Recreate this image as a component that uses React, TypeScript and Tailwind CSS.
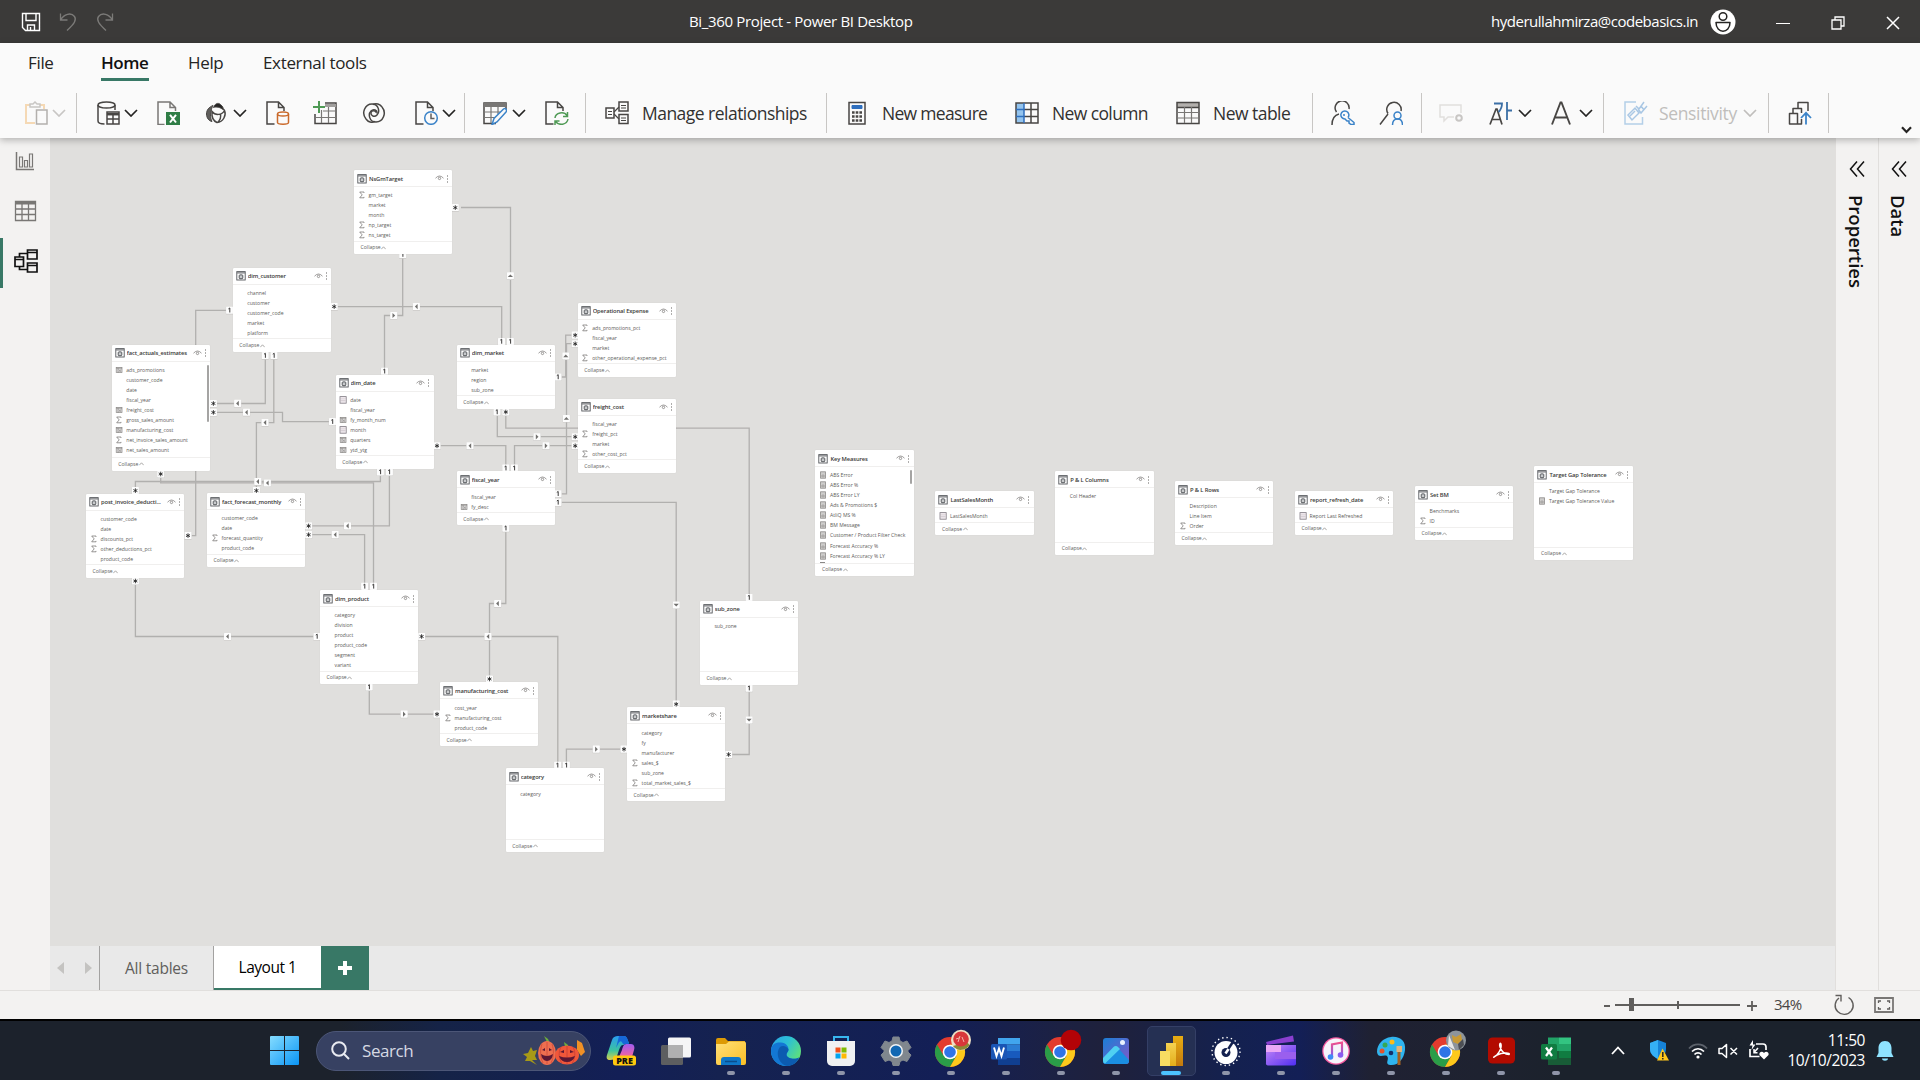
import React from "react";

type Kind = "sum" | "calc" | "date" | "measure" | "";
type Row = [Kind, string];
interface TableCard {
  name: string;
  x: number;
  y: number;
  h: number;
  rows: Row[];
  scroll?: "long" | "short";
}

const CANVAS_X = 50;
const CANVAS_Y = 138;

const TABLES: TableCard[] = [
  { name: "NsGmTarget", x: 354, y: 170, h: 84, rows: [["sum", "gm_target"], ["", "market"], ["", "month"], ["sum", "np_target"], ["sum", "ns_target"]] },
  { name: "dim_customer", x: 232.7, y: 267.6, h: 84.2, rows: [["", "channel"], ["", "customer"], ["", "customer_code"], ["", "market"], ["", "platform"]] },
  { name: "fact_actuals_estimates", x: 111.7, y: 344.6, h: 126, scroll: "long", rows: [["calc", "ads_promotions"], ["", "customer_code"], ["", "date"], ["", "fiscal_year"], ["calc", "freight_cost"], ["sum", "gross_sales_amount"], ["calc", "manufacturing_cost"], ["sum", "net_invoice_sales_amount"], ["calc", "net_sales_amount"]] },
  { name: "dim_date", x: 335.6, y: 374.5, h: 94, rows: [["date", "date"], ["", "fiscal_year"], ["calc", "fy_month_num"], ["date", "month"], ["calc", "quarters"], ["calc", "ytd_ytg"]] },
  { name: "dim_market", x: 456.7, y: 344.8, h: 64, rows: [["", "market"], ["", "region"], ["", "sub_zone"]] },
  { name: "Operational Expense", x: 577.7, y: 302.8, h: 74, rows: [["sum", "ads_promotions_pct"], ["", "fiscal_year"], ["", "market"], ["sum", "other_operational_expense_pct"]] },
  { name: "freight_cost", x: 577.7, y: 398.8, h: 74, rows: [["", "fiscal_year"], ["sum", "freight_pct"], ["", "market"], ["sum", "other_cost_pct"]] },
  { name: "fiscal_year", x: 456.7, y: 471.4, h: 54, rows: [["", "fiscal_year"], ["calc", "fy_desc"]] },
  { name: "post_invoice_deducti...", x: 86, y: 493.8, h: 84, rows: [["", "customer_code"], ["", "date"], ["sum", "discounts_pct"], ["sum", "other_deductions_pct"], ["", "product_code"]] },
  { name: "fact_forecast_monthly", x: 207, y: 493, h: 74, rows: [["", "customer_code"], ["", "date"], ["sum", "forecast_quantity"], ["", "product_code"]] },
  { name: "dim_product", x: 320, y: 590, h: 94, rows: [["", "category"], ["", "division"], ["", "product"], ["", "product_code"], ["", "segment"], ["", "variant"]] },
  { name: "manufacturing_cost", x: 440, y: 682.4, h: 64, rows: [["", "cost_year"], ["sum", "manufacturing_cost"], ["", "product_code"]] },
  { name: "category", x: 505.7, y: 768.4, h: 84, rows: [["", "category"]] },
  { name: "marketshare", x: 627, y: 707.4, h: 94, rows: [["", "category"], ["", "fy"], ["", "manufacturer"], ["sum", "sales_$"], ["", "sub_zone"], ["sum", "total_market_sales_$"]] },
  { name: "sub_zone", x: 699.8, y: 600.8, h: 84, rows: [["", "sub_zone"]] },
  { name: "Key Measures", x: 815.4, y: 450, h: 126, scroll: "short", rows: [["measure", "ABS Error"], ["measure", "ABS Error %"], ["measure", "ABS Error LY"], ["measure", "Ads & Promotions $"], ["measure", "AtliQ MS %"], ["measure", "BM Message"], ["measure", "Customer / Product Filter Check"], ["measure", "Forecast Accuracy %"], ["measure", "Forecast Accuracy % LY"]] },
  { name: "LastSalesMonth", x: 935.4, y: 491.2, h: 44, rows: [["date", "LastSalesMonth"]] },
  { name: "P & L Columns", x: 1055.2, y: 471, h: 84, rows: [["", "Col Header"]] },
  { name: "P & L Rows", x: 1175, y: 481, h: 64, rows: [["", "Description"], ["", "Line Item"], ["sum", "Order"]] },
  { name: "report_refresh_date", x: 1295, y: 491, h: 44, rows: [["date", "Report Last Refreshed"]] },
  { name: "Set BM", x: 1415, y: 486, h: 54, rows: [["", "Benchmarks"], ["sum", "ID"]] },
  { name: "Target Gap Tolerance", x: 1534.4, y: 466, h: 94, rows: [["", "Target Gap Tolerance"], ["measure", "Target Gap Tolerance Value"]] },
];

const LINKS = [
  "461,207.5 510.5,207.5 510.5,345",
  "402.7,254 402.7,315.5 384.5,315.5 384.5,375",
  "331,306.6 501.7,306.6 501.7,345",
  "233,310.3 195.7,310.3 195.7,535.6 184,535.6",
  "265.3,351 265.3,403.5 210,403.5",
  "273.8,351 273.8,422.6 256.4,422.6 256.4,494",
  "210,412.3 282.5,412.3 282.5,421.7 336,421.7",
  "434,445.7 505.8,445.7 505.8,472",
  "380.4,468 380.4,481.5 135.4,481.5 135.4,494",
  "389.4,468 389.4,525.8 305,525.8",
  "160.7,470 160.7,482.8 373.5,482.8 373.5,590",
  "305,534.6 364.6,534.6 364.6,590",
  "135.4,577 135.4,636.5 320,636.5",
  "418,636.5 557.8,636.5 557.8,769",
  "369.3,683 369.3,714.2 440,714.2",
  "505.8,525 505.8,603.5 489.5,603.5 489.5,683",
  "566.4,769 566.4,749.2 627,749.2",
  "555,502.4 676.2,502.4 676.2,708",
  "555,493.8 566.5,493.8 566.5,343.7 578,343.7",
  "555,377 565.7,377 565.7,335.2 578,335.2",
  "497.3,408 497.3,436.7 578,436.7",
  "505.8,408 505.8,428.2 749.2,428.2 749.2,601",
  "514.5,472 514.5,445.7 578,445.7",
  "749.2,684 749.2,754.5 725,754.5",
];

type Mark = [number, number, "1" | "*" | "l" | "r" | "u" | "d"];
const MARKS: Mark[] = [
  [455.3, 207.6, "*"], [510.4, 275.8, "u"], [510.4, 341.5, "1"],
  [402.7, 254.6, "1"], [393.7, 315.5, "r"], [384.5, 371.3, "1"],
  [334.2, 306.6, "*"], [416.4, 306.6, "l"], [501.5, 341.5, "1"],
  [229.6, 310.3, "1"], [188, 535.6, "*"],
  [265.2, 355.6, "1"], [237.6, 403.4, "l"], [213.4, 403.5, "*"],
  [274, 355.6, "1"], [265, 422.6, "l"], [256.4, 490.6, "*"],
  [213.4, 412.4, "*"], [246.5, 412.3, "l"], [332.5, 421.7, "1"],
  [437, 445.8, "*"], [470, 445.8, "l"], [505.8, 468.2, "1"],
  [380.4, 472, "1"], [257.8, 481.6, "l"], [135.4, 490.6, "*"],
  [389.4, 472, "1"], [347.5, 525.9, "l"], [308.6, 525.9, "*"],
  [160.7, 474, "*"], [267.4, 483, "l"], [373.5, 586.4, "1"],
  [308.6, 534.7, "*"], [335.2, 534.7, "l"], [364.6, 586.4, "1"],
  [135.4, 581, "*"], [227.5, 636.5, "l"], [317, 636.5, "1"],
  [421.6, 636.5, "*"], [488, 636.5, "l"], [557.6, 765.3, "1"],
  [369.2, 687, "1"], [404.2, 714.2, "r"], [437, 714.2, "*"],
  [505.8, 528.2, "1"], [497.6, 603.6, "l"], [489.5, 679, "*"],
  [566.4, 765.3, "1"], [596.3, 749.2, "r"], [624, 749.2, "*"],
  [558, 502.4, "1"], [676.2, 605, "d"], [676.2, 704.2, "*"],
  [558, 493.8, "1"], [566.4, 418.5, "u"], [575.2, 343.8, "*"],
  [558, 377, "1"], [565.8, 356, "u"], [575.2, 335.2, "*"],
  [497, 412, "1"], [537, 436.8, "r"], [575.2, 436.8, "*"],
  [505.8, 412, "*"], [749.1, 597.6, "1"],
  [514.4, 468.2, "1"], [546, 445.8, "r"], [575.2, 445.8, "*"],
  [749.1, 688.2, "1"], [749.1, 720, "d"], [728.6, 754.5, "*"],
];

function MarkShape({ m }: { m: Mark }) {
  const [x, y, k] = m;
  return (
    <g transform={`translate(${x} ${y})`}>
      <rect x="-3.7" y="-3.3" width="7.4" height="7.4" rx=".6" fill="#cbcac8" />
      <rect x="-3.5" y="-3.6" width="7" height="7.1" rx=".6" fill="#fdfdfd" />
      {k === "1" && <path d="M-1.2-1.4 .2-2.3V2.2" fill="none" stroke="#3c3b3a" strokeWidth="1" />}
      {k === "*" && <path d="M0-2.3V2.3M-2-1.1 2 1.1M-2 1.1 2-1.1" stroke="#222" strokeWidth=".85" />}
      {k === "l" && <path d="M1.2-2.6V2.6L-1.5 0Z" fill="#706f6d" />}
      {k === "r" && <path d="M-1.2-2.6V2.6L1.5 0Z" fill="#706f6d" />}
      {k === "u" && <path d="M-2.6 1.2H2.6L0-1.4Z" fill="#706f6d" />}
      {k === "d" && <path d="M-2.6-1.2H2.6L0 1.4Z" fill="#706f6d" />}
    </g>
  );
}

function RowIcon({ kind }: { kind: Kind }) {
  const c = "#8a8886";
  return (
    <svg className="h-[8px] w-[8px] shrink-0" viewBox="0 0 8 8" fill="none" stroke={c}>
      {kind === "sum" && <path d="M6 1.9V1H1.7L4.2 3.9 1.700 6.800H6V5.900" strokeWidth=".75" stroke="#757371" />}
      {kind === "calc" && (
        <>
          <rect x="1.2" y="1.4" width="5.8" height="5.2" fill="#e2e1e0" strokeWidth=".7" />
          <path d="M1.2 2.2H7M3 2V6.6M3.5 3.3 6.3 6M6.3 3.3 3.5 6" strokeWidth=".7" />
        </>
      )}
      {kind === "date" && (
        <>
          <rect x="1" y=".6" width="6.200" height="6.600" fill="#f3eff3" strokeWidth=".8" stroke="#807b83" />
          <path d="M1 2.200H7M3 2.500V6.500M5 2.500V6.500M1.500 4.500H6.500" strokeWidth=".35" stroke="#b9adb5" />
        </>
      )}
      {kind === "measure" && (
        <>
          <rect x="1.6" y=".8" width="4.8" height="6.4" fill="#e4e3e2" strokeWidth=".8" />
          <path d="M1.6 2H6.4M3.2 3V6.8M4.8 3V6.8M2 4.3H6M2 5.7H6" strokeWidth=".5" />
        </>
      )}
    </svg>
  );
}

function Card({ t }: { t: TableCard }) {
  return (
    <section
      className="absolute flex w-[98.4px] flex-col overflow-hidden rounded-[1px] bg-white shadow-[0_0_1px_rgba(0,0,0,0.15)]"
      style={{ left: t.x - CANVAS_X, top: t.y - CANVAS_Y, height: t.h }}
    >
      <header className="flex h-[17px] shrink-0 items-center border-b border-[#f0efee] pl-[3px] pr-[3.5px] pt-[1px]">
        <svg className="h-[10px] w-[10px]" viewBox="0 0 10 10" fill="none" stroke="#55585c">
          <rect x=".8" y=".6" width="8.400" height="8.400" strokeWidth=".9" />
          <path d="M.8 1.900H9.200" strokeWidth="1.100" stroke="#77797c" />
          <rect x="3.200" y="3.900" width="3.600" height="3.800" rx=".8" strokeWidth="1" fill="#c8cacc" />
        </svg>
        <h3 className="ml-[2px] flex-1 truncate text-[5.8px] leading-[10px] font-semibold tracking-[-0.022em] text-[#3a3938]">{t.name}</h3>
        <svg className="-mt-[1px] h-[6px] w-[9px]" viewBox="0 0 9 6" fill="none" stroke="#7d7b79" strokeWidth=".75">
          <path d="M.5 3.2Q4.5-1.2 8.5 3.2" />
          <circle cx="4.5" cy="3.4" r="1.2" />
        </svg>
        <svg className="ml-[2px] h-[8px] w-[3px]" viewBox="0 0 3 8" fill="#605e5c">
          <path d="M1 .4H2V1.400H1ZM1 3.400H2V4.400H1ZM1 6.400H2V7.400H1Z" />
        </svg>
      </header>
      <div className="relative min-h-0 flex-1 overflow-hidden pt-[3.2px]">
        {t.rows.map(([kind, label]) => (
          <div key={label} className="flex h-[10.05px] items-center pl-[3.8px]">
            <RowIcon kind={kind} />
            <span className="ml-[2.8px] whitespace-nowrap text-[5.1px] leading-[10px] text-[#5d5b59]">{label}</span>
          </div>
        ))}
        {t.scroll === "short" && <div className="ml-[5px] mt-[1px] h-[1px] w-[5px] bg-[#8a8886]" />}
        {t.scroll === "long" && <div className="absolute right-[1.5px] top-[3px] h-[57px] w-[2px] rounded bg-[#a5a4a3]" />}
        {t.scroll === "short" && <div className="absolute right-[1.5px] top-[3px] h-[14px] w-[2px] rounded bg-[#a5a4a3]" />}
      </div>
      <footer className="flex h-[13.4px] shrink-0 items-center border-t border-[#f0efee] pl-[6.6px] pt-[1px] text-[5.1px] text-[#605e5c]">
        Collapse
        <svg className="ml-[.5px] -mt-[1px] h-[4px] w-[5px]" viewBox="0 0 5 4" fill="none" stroke="#7d7b79" strokeWidth=".65">
          <path d="M.3 3.2 2.5 .8 4.7 3.2" />
        </svg>
      </footer>
    </section>
  );
}

function Svg({ className = "", children, w = 24, h = 24 }: { className?: string; children: React.ReactNode; w?: number; h?: number }) {
  return (
    <svg className={`shrink-0 ${className}`} width={w} height={h} viewBox={`0 0 ${w} ${h}`} fill="none" stroke="#484644" strokeWidth="1.5">
      {children}
    </svg>
  );
}

function Chev({ className = "", color = "#252423" }: { className?: string; color?: string }) {
  return (
    <svg className={`h-[8px] w-[14px] shrink-0 ${className}`} viewBox="0 0 14 8" fill="none" stroke={color} strokeWidth="1.7">
      <path d="M1 1 7 7 13 1" />
    </svg>
  );
}

const Divider = ({ className = "" }: { className?: string }) => <div className={`h-10 w-px shrink-0 bg-[#c8c6c4] ${className}`} />;

const DOC = "M8.5 23H1V1H12.5L18 6.5V10M12.5 1V6.5H18";

function RelIcon() {
  return (
    <>
      <rect x="1" y="7" width="8" height="10" fill="#fafafa" />
      <rect x="14" y="1" width="9" height="9" />
      <rect x="14" y="13.5" width="9" height="9" />
      <path d="M9 11 14 6M9 13 14 18M3 10.5H7M3 13.5H7M16 4.5H21M16 7H21M16 17H21M16 19.5H21" strokeWidth="1.2" />
    </>
  );
}

function Ribbon() {
  return (
    <div className="flex h-[50px] items-center pl-[24px]">
      <Svg>
        <path d="M6 4H2V22H11M16 4H20V8" stroke="#f5d9b5" strokeWidth="2" />
        <path d="M6 6V3H9L11 1 13 3H16V6Z" stroke="#c8c6c4" />
        <path d="M12.5 9H23V23H12.5Z" stroke="#b3b0ad" fill="#fafafa" />
      </Svg>
      <Chev className="ml-[4px]" color="#c8c6c4" />
      <Divider className="ml-[10px]" />
      <Svg className="ml-[20px]">
        <ellipse cx="9.5" cy="4" rx="8.5" ry="3" />
        <path d="M1 4V20C1 21.8 4 23 7.5 23M18 4V9" />
        <rect x="10" y="11" width="12" height="12" />
        <path d="M10 13.2H22" strokeWidth="2.500" />
        <path d="M10 18H22M16 13V23" />
      </Svg>
      <Chev className="ml-[3px]" />
      <Svg className="ml-[19px]">
        <path d="M7.500 23.500H1V1H13L18.500 6.500V10M13 1V6.500H18.500" stroke="#797775" />
        <path d="M9 11H23V24H9Z" fill="#2f7d46" stroke="none" />
        <path d="M13 13.800 19 21.500M19 13.800 13 21.500" stroke="#fff" strokeWidth="2" />
      </Svg>
      <Svg className="ml-[24px]">
        <path d="M8 4.500C4 6 1.500 9 1.500 13 1.500 17 4 20 7 20.500 5.500 17.500 5 14 6 10.500 6.500 8 7 6 8 4.500Z" fill="#605e5c" strokeWidth="1" />
        <path d="M7 10.500C10 14.500 17 14.500 19.500 9.500 21.500 14 18.500 21 12 21.500 8.500 20 6.500 16 7 10.500ZM13 21C15.500 18.500 16 16 15.500 13.500" />
        <path d="M8.500 6.500C9.500 3 13 1 15.500 3.500 18 5.500 18.500 7.500 18.500 9 15 6 11.500 5.500 8.500 6.500Z" fill="#252423" strokeWidth="1" />
      </Svg>
      <Chev className="ml-[4px]" />
      <Svg className="ml-[19px]">
        <path d={DOC} />
        <path d="M11.500 13V21.500C11.500 23.700 22.500 23.700 22.500 21.500V13" stroke="#ca6a2b" fill="#fafafa" />
        <ellipse cx="17" cy="13" rx="5.500" ry="2" stroke="#ca6a2b" fill="#fafafa" />
      </Svg>
      <Svg className="ml-[23px]">
        <path d="M12 2H23V22.500H2V13" />
        <path d="M12 4.500H23" strokeWidth="3" stroke="#a19f9d" />
        <path d="M8.500 9V22M15.500 6V22M3 16.500H23M10 10H23" stroke="#797775" strokeWidth="1.200" />
        <path d="M6 0V12M0 6H12" stroke="#4f9a55" strokeWidth="2" />
      </Svg>
      <Svg className="ml-[25px]">
        <path d="M4 18C-1 12 3 3 10 3 17 3 18 11 15 14 12.500 16.500 8.500 15 9 11.500 9.500 9 13.500 9 14 11.500" />
        <path d="M20 6C25 12 21 21 14 21 7 21 6 13 9 10 11.500 7.500 15.500 9 15 12.500" />
        <path d="M4 18C6 21 10 22 13 20.500M20 6C18 3 14 2 11 3.500" />
      </Svg>
      <Svg className="ml-[29px]">
        <path d={DOC} />
        <circle cx="16" cy="17" r="6.300" stroke="#3b83c8" fill="#fafafa" />
        <path d="M16 12.500V17.500H19.500" stroke="#605e5c" />
      </Svg>
      <Chev className="ml-[3px]" />
      <Divider className="ml-[8px]" />
      <Svg className="ml-[18px]">
        <path d="M13 22.500H1V2H23V8" />
        <path d="M1 4H23" strokeWidth="4" stroke="#797775" />
        <path d="M8 6V22M15 6V13M1 11H17M1 16.500H12" stroke="#797775" strokeWidth="1.200" />
        <path d="M9 23.500 11 17.500 20.500 8C22.500 6.500 24.500 9 23 11L14 21Z" stroke="#3b83c8" fill="#fafafa" />
      </Svg>
      <Chev className="ml-[5px]" />
      <Svg className="ml-[19px]">
        <path d={DOC} />
        <path d="M10 17C10.500 11.500 19 10 22 14.500M22.500 11V15.500H18M23 18C22 24 14 25 10.500 20.500M10 24V20H14.500" stroke="#4f9a55" />
      </Svg>
      <Divider className="ml-[16px]" />
      <Svg className="ml-[19px]"><RelIcon /></Svg>
      <span className="ml-[13px] w-[167px] whitespace-nowrap pt-[1px] text-[17.500px] tracking-[-0.03em]">Manage relationships</span>
      <Divider className="ml-[17px]" />
      <Svg className="ml-[18px]">
        <rect x="4" y="1.500" width="16" height="21.500" />
        <path d="M7 4.500H17V7.500H7Z" stroke="#2f6fbe" fill="#2f6fbe" strokeWidth="1" />
        <path d="M7 11.500H17M7 15.500H17M7 19.500H17" strokeWidth="2.500" strokeDasharray="2.600 1.100" />
      </Svg>
      <span className="ml-[13px] w-[106px] whitespace-nowrap pt-[1px] text-[17.500px] tracking-[-0.04em]">New measure</span>
      <Svg className="ml-[27px]">
        <path d="M1 2H9V22H1Z" fill="#94c4ee" stroke="none" />
        <path d="M1 2H23V22H1ZM16 2V22M9 8.500H23M9 15.500H23" />
        <path d="M9 2V22M1 8.500H9M1 15.500H9" stroke="#2f6fbe" />
      </Svg>
      <span className="ml-[13px] w-[98px] whitespace-nowrap pt-[1px] text-[17.500px] tracking-[-0.035em]">New column</span>
      <Svg className="ml-[26px]">
        <path d="M1 4H23" stroke="#b3b0ad" strokeWidth="4" />
        <path d="M1 1.500H23V22.500H1ZM1 6.500H23" />
        <path d="M8.500 6V22M15.500 6V22M1 11.500H23M1 17H23" stroke="#797775" strokeWidth="1.200" />
      </Svg>
      <span className="ml-[13px] w-[80px] whitespace-nowrap pt-[1px] text-[17.500px] tracking-[-0.03em]">New table</span>
      <Divider className="ml-[19px]" />
      <Svg className="ml-[18px]">
        <path d="M5.500 11A7 7 0 1 1 18 8M1 24C1 18 4 14 8 13" />
        <path d="M17 16.500A4 4 0 1 0 14 18L16 20 18 20 18 22 20 23.500 23 23.500V21.500L17 16.500" stroke="#3b83c8" />
        <circle cx="13" cy="14" r="1" fill="#3b83c8" stroke="none" />
      </Svg>
      <Svg className="ml-[24px]">
        <path d="M9 12.500A7.200 7.200 0 1 1 22 10M9 13 1 23.500" />
        <circle cx="18.500" cy="14.500" r="3.500" stroke="#3b83c8" />
        <path d="M13.500 24C13.500 20 15.500 18 18.500 18S23.500 20 23.500 24" stroke="#3b83c8" />
      </Svg>
      <Divider className="ml-[18px]" />
      <Svg className="ml-[17px]">
        <path d="M15 16H9L5 20V16H1V4H22V12" stroke="#e1dfdd" />
        <circle cx="20" cy="17" r="2.800" stroke="#c8c6c4" strokeWidth="2" />
      </Svg>
      <Svg className="ml-[26px]">
        <path d="M1 23.500 7 8H8L13 23.500M3 18.500H11.500" strokeWidth="1.700" />
        <path d="M5 2.500H13C13 6 12 8.500 9.500 11M18 1V19M18 9.500H23" stroke="#3b6fa5" strokeWidth="1.800" />
      </Svg>
      <Chev className="ml-[5px]" />
      <Svg className="ml-[18px]">
        <path d="M2 23.500 10.500 1.500H11.500L20 23.500M5 16.500H17" strokeWidth="1.900" />
      </Svg>
      <Chev className="ml-[5px]" />
      <Divider className="ml-[10px]" />
      <Svg className="ml-[20px]">
        <path d="M12 1H1V23H18.500V16" stroke="#b4cfe8" />
        <path d="M4 14 11 7 15 12 8 19ZM12 5 15 8 20 1M14 8 17 12 23 5M6 15 11 10M17 5 20 9" stroke="#a9c7e4" />
      </Svg>
      <span className="ml-[11px] w-[80px] whitespace-nowrap pt-[1px] text-[17.500px] tracking-[-0.02em] text-[#c0bebc]">Sensitivity</span>
      <Chev className="ml-[4px]" color="#c0bebc" />
      <Divider className="ml-[11px]" />
      <Svg className="ml-[19px]">
        <path d="M1.500 12.500H9.500V23H1.500ZM5 12.500V7.500H13.500V12M9.500 23H13.500V18M10 7.500V1.500H20V10" strokeLinejoin="round" />
        <path d="M18 23.500V12M13 17 18 11.800 23 17" stroke="#3b83c8" strokeWidth="1.800" />
      </Svg>
      <Divider className="ml-[16px]" />
      <svg className="ml-[72px] mt-[33px] h-[8px] w-[11px] shrink-0" viewBox="0 0 11 8" fill="none" stroke="#252423" strokeWidth="2.2">
        <path d="M1 1.200 5.500 6 10 1.200" />
      </svg>
    </div>
  );
}

function TitleBar() {
  return (
    <div className="grid h-[43px] grid-cols-3 items-center bg-[#3b3a39] text-white">
      <div className="flex items-center pl-[21px]">
        <Svg w={20} h={20}>
          <path d="M1.500 1.500H18.500V18.500H4.500L1.500 15.500ZM5 1.500V8.500H15V1.500M6.500 18.500V13H13.500V18.500M9.500 15V18.500" stroke="#fff" strokeWidth="1.400" />
        </Svg>
        <Svg w={20} h={20} className="ml-[18px]">
          <path d="M1.500 1.500V8H8.500M1.500 8C5 2 12 0 15.500 4.500 18 8 15 12 8 18.500" stroke="#7b7a78" strokeWidth="1.300" />
        </Svg>
        <Svg w={20} h={20} className="ml-[16px]">
          <path d="M17.500 1.500V8H10.500M17.500 8C14 2 7 0 3.500 4.500 1 8 4 12 11 18.500" stroke="#7b7a78" strokeWidth="1.300" />
        </Svg>
      </div>
      <div className="ml-[49px] whitespace-nowrap text-[15px] tracking-[-0.023em]">Bi_360 Project - Power BI Desktop</div>
      <div className="flex items-center justify-end pr-[20px]">
        <span className="whitespace-nowrap text-[15px] tracking-[-0.032em]">hyderullahmirza@codebasics.in</span>
        <Svg w={26} h={26} className="ml-[12px]">
          <circle cx="13" cy="13" r="12.500" fill="#fff" stroke="none" />
          <circle cx="13" cy="7.500" r="3.800" stroke="#252423" />
          <path d="M6 13.500H20C20 25 6 25 6 13.500Z" stroke="#252423" strokeLinejoin="round" />
        </Svg>
        <div className="ml-[40px] mt-[4px] h-[1.500px] w-[14px] bg-white" />
        <Svg w={14} h={14} className="ml-[41px] mt-[3px]">
          <path d="M1 4H10V13H1ZM4 4V1H13V10H10" stroke="#fff" strokeWidth="1.300" />
        </Svg>
        <Svg w={14} h={14} className="ml-[41px] mt-[3px]">
          <path d="M1 1 13 13M13 1 1 13" stroke="#fff" strokeWidth="1.500" />
        </Svg>
      </div>
    </div>
  );
}

function Rail() {
  return (
    <nav className="flex w-[50px] shrink-0 flex-col bg-[#f3f2f1]">
      <div className="flex h-[49px] items-end pl-[15px] pb-[16px]">
        <Svg w={20} h={19}>
          <path d="M1.500 0V17.500H19" stroke="#797775" />
          <path d="M4.500 5H7.500V15H4.500ZM9.500 8.500H12.500V15H9.500ZM14.500 2H17.500V15H14.500Z" stroke="#797775" strokeWidth="1.200" />
        </Svg>
      </div>
      <div className="flex h-[51px] items-center pl-[14px] pb-[4px]">
        <Svg w={23} h={22}>
          <path d="M1.500 3H21.500" stroke="#797775" strokeWidth="3" />
          <path d="M1.500 1.500H21.500V20.500H1.500ZM1.500 9H21.500M1.500 14.500H21.500M8 4V20M14.500 4V20" stroke="#797775" strokeWidth="1.300" />
        </Svg>
      </div>
      <div className="flex h-[50px] items-center border-l-[3px] border-[#387866] pl-[11px] pb-[4px]">
        <Svg w={24} h={24}>
          <path d="M1 8H9.500V17.500H1ZM13.500 1H23V10H13.500ZM13.500 14H23V23H13.500ZM1 10.500H9.500M13.500 3.500H23M13.500 16.500H23M5.500 8V4.500H13.500M5.500 17.500V20.500H13.500" stroke="#111" strokeWidth="1.700" />
        </Svg>
      </div>
    </nav>
  );
}

function Pane({ label }: { label: string }) {
  return (
    <aside className="flex w-[42.500px] shrink-0 flex-col items-center border-l border-[#e1dfdd] bg-[#f3f2f1] pt-[23px] text-[#111]">
      <Svg w={16} h={16}>
        <path d="M8 .5 1.500 8 8 15.500M15 .5 8.500 8 15 15.500" stroke="#111" />
      </Svg>
      <span className="mr-[2px] mt-[18px] whitespace-nowrap text-[18.500px] leading-[24px] font-semibold [writing-mode:vertical-rl]">{label}</span>
    </aside>
  );
}

function LayoutTabs() {
  return (
    <div className="flex h-[44px] bg-[#e9e9e9] text-[15.500px]">
      <div className="flex w-[50px] items-center justify-between border-r border-[#a3a2a1] pl-[7px] pr-[7px]">
        <svg className="h-[12px] w-[7px]" viewBox="0 0 7 12" fill="#c4c3c1"><path d="M7 0V12L0 6Z" /></svg>
        <svg className="h-[12px] w-[7px]" viewBox="0 0 7 12" fill="#c4c3c1"><path d="M0 0V12L7 6Z" /></svg>
      </div>
      <div className="flex w-[114px] items-center justify-center border-r border-[#a3a2a1] pt-[2px] tracking-[-0.015em] text-[#605e5c]">All tables</div>
      <div className="flex w-[107px] items-center justify-center border-b-[2px] border-[#387866] bg-white pt-[2px] tracking-[-0.03em] text-black">Layout 1</div>
      <div className="flex w-[48px] items-center justify-center bg-[#387866]">
        <Svg w={14} h={14}><path d="M7 0V14M0 7H14" stroke="#fff" strokeWidth="4" /></Svg>
      </div>
    </div>
  );
}

function StatusBar() {
  return (
    <div className="flex h-[29px] items-center justify-end border-t border-[#e1dfdd] bg-[#f3f2f1] pr-[26px] pb-[1px]">
      <div className="mt-[2px] h-[2px] w-[6px] bg-[#605e5c]" />
      <div className="relative ml-[5px] mt-[1px] h-[14px] w-[125px]">
        <div className="mt-[6px] h-[2px] bg-[#605e5c]" />
        <div className="absolute left-[14px] top-0 h-[13px] w-[5px] bg-[#605e5c]" />
        <div className="absolute left-[62px] top-[3px] h-[8px] w-[2px] bg-[#605e5c]" />
      </div>
      <Svg w={10} h={10} className="ml-[7px] mt-[2px]"><path d="M5 0V10M0 5H10" stroke="#605e5c" strokeWidth="1.800" /></Svg>
      <span className="ml-[17px] w-[30px] whitespace-nowrap text-[15px] tracking-[-0.05em] text-[#484644]">34%</span>
      <Svg w={21} h={22} className="ml-[30px]">
        <path d="M14.500 3.500A9 9 0 1 1 5 4M1.500 1.500H7V7.500" stroke="#605e5c" strokeWidth="1.400" />
      </Svg>
      <Svg w={20} h={16} className="ml-[19px]">
        <path d="M1 1H19V15H1Z" stroke="#797775" strokeWidth="1.800" />
        <path d="M4.500 6V4H7M13 4H15.500V6M15.500 10V12H13M7 12H4.500V10" stroke="#605e5c" strokeWidth="1.300" />
      </Svg>
    </div>
  );
}

function Chrome({ badge }: { badge: "melon" | "red" | "photo" }) {
  return (
    <>
      <circle cx="17" cy="20" r="15" fill="#e33b2e" />
      <path d="M4 12.500A15 15 0 0 0 17 35L23.500 23.800 17 20 10.500 23.500Z" fill="#2a9d48" />
      <path d="M17 35A15 15 0 0 0 30 12.500H17L23.500 23.800Z" fill="#fdc91b" />
      <circle cx="17" cy="20" r="7.300" fill="#fff" />
      <circle cx="17" cy="20" r="5.800" fill="#2f74e6" />
      {badge === "melon" && (
        <>
          <ellipse cx="28" cy="8" rx="10" ry="10.300" fill="#eedfc4" />
          <path d="M20 14A10 10 0 0 0 36.500 13L34 10Z" fill="#8d8a35" />
          <ellipse cx="28" cy="7" rx="7.800" ry="7.600" fill="#d8373a" />
          <path d="M25 10 27 4M31 10 29 5M23 7 26 6" stroke="#f3b5aa" strokeWidth="1" fill="none" />
        </>
      )}
      {badge === "red" && <circle cx="28" cy="8" r="10.300" fill="#b20307" />}
      {badge === "photo" && (
        <>
          <circle cx="28" cy="8.500" r="10" fill="#8d949b" />
          <path d="M21 3 27 18 20 14Z" fill="#e8e8e8" />
          <path d="M24 3 28 5 33 2 34 8 30 12 25 10Z" fill="#c99a34" />
          <path d="M30 12 35 7 36 13 31 18Z" fill="#4c4f55" />
        </>
      )}
    </>
  );
}

const APPS: { id: string; idle?: boolean; active?: boolean; art: React.ReactNode }[] = [
  { id: "copilot", idle: true, art: (
    <>
      <path d="M4 23 9 8C10 5 12 4 15 4H21C24 4 24 7 26 11L20 13C18 13 17 15 16 18L14 24C13 27 10 28 7 28 4 28 3 26 4 23Z" fill="url(#cpA)" />
      <path d="M16 4H21C24 4 25 8 26 12H20C18 8 17 9 15 12L13 16Z" fill="#1667d8" />
      <path d="M19 18C20 14 21 12 24 12H28C31 12 32 15 31 18L29 25H16Z" fill="url(#cpB)" />
      <rect x="10" y="23.500" width="23" height="10" rx="2.500" fill="#ffc90e" />
      <text x="21.500" y="32" textAnchor="middle" fontSize="9" fontWeight="800" fill="#111" fontFamily="Open Sans, sans-serif">PRE</text>
    </>
  ) },
  { id: "taskview", idle: true, art: (
    <>
      <rect x="3" y="13" width="22" height="20" rx="1.500" fill="#5d5e60" />
      <rect x="10" y="5.500" width="23" height="20" rx="1.500" fill="#f5f5f6" />
      <path d="M10 13H25V25.500H10Z" fill="#b0b0b1" />
    </>
  ) },
  { id: "explorer", art: (
    <>
      <path d="M3 8A2 2 0 0 1 5 6H12L15 9H32V16H3Z" fill="#dd9a05" />
      <path d="M3 12H13L16 9.500H31A2 2 0 0 1 33 11.500V31A2 2 0 0 1 31 33H5A2 2 0 0 1 3 31Z" fill="url(#fold)" />
      <path d="M8 33V28A3 3 0 0 1 11 25H25A3 3 0 0 1 28 28V33Z" fill="#0f78c8" />
      <path d="M12 29.500H24" stroke="#0a4d8c" strokeWidth="1.500" />
    </>
  ) },
  { id: "edge", art: (
    <>
      <circle cx="18" cy="19" r="15" fill="url(#edA)" />
      <path d="M3 19C3 12 8 10 13 10.500 18 11 20.500 14 20.500 17.500 20.500 20 18.500 20.500 18.500 23 19 26.500 27 28 31 25.500 28 32 22 34 18 34 9 34 3 27 3 19Z" fill="#1377d4" />
      <path d="M12 15C7 21 11 33 20 34 25 33.500 29 31 31 25.500 27 28 19 26.500 18.500 23 18.500 20 20.500 20 20.500 17.500 19 14 14.500 13 12 15Z" fill="#0c5bb0" />
    </>
  ) },
  { id: "store", art: (
    <>
      <path d="M11 9V5H25V9" stroke="#38b6ee" strokeWidth="2" fill="none" />
      <path d="M4 9H32V29A5 5 0 0 1 27 34H9A5 5 0 0 1 4 29Z" fill="#f0f1f2" />
      <path d="M12.500 15.500H17.500V20.500H12.500Z" fill="#f1511b" />
      <path d="M18.500 15.500H23.500V20.500H18.500Z" fill="#80bb03" />
      <path d="M12.500 21.500H17.500V26.500H12.500Z" fill="#02a5ef" />
      <path d="M18.500 21.500H23.500V26.500H18.500Z" fill="#ffb902" />
    </>
  ) },
  { id: "settings", art: (
    <>
      <path d="M15 5H21L22 9 25 10.500 29 9 33 15.500 30 18.500V20L33 23 29 29.500 25 28 22 29.500 21 33.500H15L14 29.500 11 28 7 29.500 3 23 6 20V18.500L3 15.500 7 9 11 10.500 14 9Z" fill="#80878e" strokeLinejoin="round" stroke="#80878e" strokeWidth="1" />
      <circle cx="18" cy="19" r="7" fill="#f2f4f5" />
      <circle cx="18" cy="19" r="5.500" fill="#1268b3" />
    </>
  ) },
  { id: "chrome1", art: <Chrome badge="melon" /> },
  { id: "word", art: (
    <>
      <path d="M10 6H32V12.500H10Z" fill="#41a5ee" />
      <path d="M10 12.500H32V19H10Z" fill="#2b7cd3" />
      <path d="M10 19H32V26H10Z" fill="#185abd" />
      <path d="M10 26H32V33H10Z" fill="#103f91" />
      <rect x="3" y="12" width="16" height="15.500" rx="1.500" fill="#1a55b5" />
      <path d="M6 15.500 8.500 24 11 16.500 13.500 24 16 15.500" stroke="#fff" strokeWidth="1.900" fill="none" />
    </>
  ) },
  { id: "chrome2", art: <Chrome badge="red" /> },
  { id: "photos", art: (
    <>
      <rect x="5" y="6" width="26" height="26" rx="3" fill="url(#phA)" />
      <circle cx="24.500" cy="10.500" r="2.500" fill="#e9f2ff" />
      <path d="M5 27 15.500 16A3 3 0 0 1 20 16L31 28V29A3 3 0 0 1 28 32H8A3 3 0 0 1 5 29Z" fill="#1b8fe2" />
      <path d="M5 26 15.500 15A3 3 0 0 1 20 15L22 17 7 31.500A3 3 0 0 1 5 29Z" fill="#4fd0f2" />
    </>
  ) },
  { id: "powerbi", active: true, art: (
    <>
      <path d="M20 4H30V34H20Z" fill="url(#pbA)" />
      <path d="M13 11H23V34H13Z" fill="url(#pbB)" />
      <path d="M7 19H17V34H7Z" fill="#f7dc62" />
    </>
  ) },
  { id: "timer", art: (
    <>
      <circle cx="18" cy="20.500" r="11.500" fill="#fff" />
      <circle cx="18" cy="20.500" r="4.500" fill="#14214f" />
      <path d="M18 20.500 24.500 10.500" stroke="#14214f" strokeWidth="2.500" />
      <path d="M17.500 21.500 20.500 17" stroke="#fff" strokeWidth="2.500" />
      <circle cx="18" cy="19.500" r="14" fill="none" stroke="#fff" strokeWidth="1.400" strokeDasharray="1.400 3" />
    </>
  ) },
  { id: "clipchamp", art: (
    <>
      <path d="M3 10 30 3.500 31 9.500 4 13Z" fill="#8a3fd0" />
      <path d="M3 13H33V31A2 2 0 0 1 31 33.500H5A2 2 0 0 1 3 31Z" fill="url(#clA)" />
      <path d="M3 13H18V20H3Z" fill="#eba8f6" />
      <path d="M12 20H33V27H12Z" fill="#9a5fee" />
    </>
  ) },
  { id: "itunes", art: (
    <>
      <circle cx="18" cy="19" r="13.800" fill="#f45aa0" />
      <circle cx="18" cy="19" r="12.500" fill="#f6f4fb" />
      <path d="M14 25V12.500L24 10.500V23" stroke="url(#muA)" strokeWidth="2.200" fill="none" />
      <circle cx="12.500" cy="25" r="2.800" fill="#3f8bf5" />
      <circle cx="22.500" cy="23" r="2.800" fill="#8a5cf0" />
    </>
  ) },
  { id: "paint", art: (
    <>
      <path d="M18 5C27 4 33 9 32 18 31 27 25 34 17 33 11 32 17 27 14 24 11 22 5 27 4 20 4 12 10 6 18 5Z" fill="#2fb4ee" />
      <circle cx="9" cy="19" r="2.500" fill="#e4532a" />
      <circle cx="12" cy="13" r="2.500" fill="#35a853" />
      <circle cx="19" cy="10" r="2.500" fill="#fbbc1a" />
      <circle cx="18" cy="21" r="2.300" fill="#14306a" />
      <path d="M26 18V33" stroke="#a3601f" strokeWidth="3" />
      <path d="M23.500 14H29V20H23.500Z" fill="#e2b57c" />
    </>
  ) },
  { id: "chrome3", art: <Chrome badge="photo" /> },
  { id: "acrobat", art: (
    <>
      <rect x="5" y="5.500" width="27" height="26" rx="4.500" fill="#b30b00" />
      <path d="M11 25C14 24 19 17 18 12.500 17.500 10 16 12 17 15 18.500 19 22 22.500 26 22.500 28 21 20 20 14 23 11.500 24.300 10 26 11 25Z" stroke="#fff" strokeWidth="1.500" fill="none" />
    </>
  ) },
  { id: "excel", art: (
    <>
      <path d="M10 5.500H21V19H10Z" fill="#21a366" />
      <path d="M21 5.500H33V12H21Z" fill="#33c481" />
      <path d="M21 12H33V19H21Z" fill="#21a366" />
      <path d="M10 19H33V33H10Z" fill="#185c37" />
      <path d="M21 19H33V26H21Z" fill="#107c41" />
      <rect x="3" y="12" width="16" height="15.500" rx="1.500" fill="#107c41" />
      <path d="M8 15.500 14 24M14 15.500 8 24" stroke="#fff" strokeWidth="2.200" />
    </>
  ) },
];

function Gradients() {
  return (
    <svg className="absolute h-0 w-0">
      <defs>
        <linearGradient id="cpA" x1="0" y1="0" x2="0" y2="1"><stop stopColor="#2a9df0" /><stop offset=".6" stopColor="#3cc3a0" /><stop offset="1" stopColor="#d9d04a" /></linearGradient>
        <linearGradient id="cpB" x1="0" y1="0" x2="0" y2="1"><stop stopColor="#a05cf0" /><stop offset="1" stopColor="#f5649c" /></linearGradient>
        <linearGradient id="fold" x1="0" y1="0" x2="1" y2="1"><stop stopColor="#ffe07a" /><stop offset="1" stopColor="#fbbf24" /></linearGradient>
        <linearGradient id="edA" x1="0" y1="0" x2="1" y2=".6"><stop stopColor="#2aa3e8" /><stop offset=".5" stopColor="#2cc0d5" /><stop offset="1" stopColor="#5fe07a" /></linearGradient>
        <linearGradient id="phA" x1="0" y1="0" x2="1" y2="1"><stop stopColor="#1a7fd6" /><stop offset="1" stopColor="#8458c8" /></linearGradient>
        <linearGradient id="pbA" x1="0" y1="0" x2="0" y2="1"><stop stopColor="#e8ad12" /><stop offset="1" stopColor="#c37a0d" /></linearGradient>
        <linearGradient id="pbB" x1="0" y1="0" x2="0" y2="1"><stop stopColor="#f5d251" /><stop offset="1" stopColor="#e3ad1a" /></linearGradient>
        <linearGradient id="clA" x1="0" y1="0" x2="1" y2="1"><stop stopColor="#c98af6" /><stop offset="1" stopColor="#4f2ef2" /></linearGradient>
        <linearGradient id="muA" x1="0" y1="0" x2="0" y2="1"><stop stopColor="#f0508c" /><stop offset="1" stopColor="#7c5cf2" /></linearGradient>
        <linearGradient id="winA" x1="0" y1="0" x2="1" y2="1"><stop stopColor="#85dcff" /><stop offset="1" stopColor="#0a95f5" /></linearGradient>
      </defs>
    </svg>
  );
}

function Pumpkins() {
  return (
    <svg className="h-[30px] w-[62px]" viewBox="0 0 62 30">
      <path d="M0 18 5 17 8 11 10 15 14 14 12 20 14 24 9 24 14 29 7 25 2 25 4 21Z" fill="#a89a16" />
      <path d="M54 4 59 7 62 16 58 20 54 14Z" fill="#f09125" />
      <path d="M24 6 21 0 25 3 27 7Z" fill="#6fae3c" />
      <ellipse cx="24" cy="17" rx="9" ry="12" fill="#ee6f50" />
      <path d="M24 6V28M19 8C17 14 17 21 20 27M29 8C31 14 31 21 28 27" stroke="#cc4a3a" strokeWidth=".8" fill="none" />
      <path d="M19 14 22 12 22 15ZM26 12 29 14 26 15ZM18 18Q24 22 30 18 29 25 24 25 19 25 18 18Z" fill="#5c1733" />
      <path d="M42 11 41 6 45 9V12Z" fill="#6fae3c" />
      <ellipse cx="44" cy="19" rx="12" ry="9.500" fill="#f0573a" />
      <path d="M44 10V28M38 11C35 16 36 24 39 27M50 11C53 16 52 24 49 27" stroke="#c63f35" strokeWidth=".8" fill="none" />
      <path d="M37 16 41 14 41 17ZM47 14 51 16 47 17ZM36 20Q44 23 52 20 50 26 44 26 38 26 36 20Z" fill="#5c1733" />
    </svg>
  );
}

function Taskbar() {
  return (
    <div className="flex h-[61px] items-center border-t-2 border-black bg-[linear-gradient(90deg,#1c222c_0,#1c222c_340px,#152347_440px,#131f56_620px,#152250_720px,#131f56_940px,#1c2143_1060px,#1f213b_1110px,#14214f_1230px,#131f56_1300px,#1f2133_1370px,#1e2230_1480px,#1b222c_1560px)] text-white">
      <Gradients />
      <svg className="ml-[270px] h-[29px] w-[29px] shrink-0" viewBox="0 0 29 29" fill="url(#winA)">
        <path d="M1 0H14V14H0V1A1 1 0 0 1 1 0ZM15 0H28A1 1 0 0 1 29 1V14H15ZM0 15H14V29H1A1 1 0 0 1 0 28ZM15 15H29V28A1 1 0 0 1 28 29H15Z" />
      </svg>
      <div className="ml-[17px] flex h-[40px] w-[275px] shrink-0 items-center rounded-full border border-[#4c5677] bg-[#374162] pl-[14px] pr-[5px]">
        <Svg w={19} h={19}><circle cx="8" cy="8" r="6.800" stroke="#e9ebf1" strokeWidth="2" /><path d="M13 13 18 18" stroke="#e9ebf1" strokeWidth="2" /></Svg>
        <span className="ml-[12px] flex-1 text-[17px] tracking-[-0.025em] text-[#d6d9e3]">Search</span>
        <Pumpkins />
      </div>
      <div className="ml-[3px] flex shrink-0">
        {APPS.map((a) => (
          <div key={a.id} className="flex w-[54.970px] justify-center">
            <div className={a.active ? "relative flex h-[50px] w-[49px] flex-col items-center rounded-[5px] border border-[#343f66] bg-[#253053]" : "relative flex h-[50px] w-[49px] flex-col items-center border border-transparent"}>
              <svg className="mt-[5px] h-[36px] w-[36px] overflow-visible" viewBox="0 0 36 36">{a.art}</svg>
              {!a.idle && <div className={a.active ? "mt-[3px] h-[4px] w-[20px] rounded-full bg-[#4cc2ff]" : "mt-[3px] h-[4px] w-[8px] rounded-full bg-[#8f95a9]"} />}
            </div>
          </div>
        ))}
      </div>
      <Svg w={14} h={9} className="ml-[28px]"><path d="M1 8 7 1.500 13 8" stroke="#fff" strokeWidth="1.800" /></Svg>
      <Svg w={20} h={22} className="ml-[24px] mb-[2px]">
        <path d="M9 1 17 4V10C17 16 12 18.500 9 20 5 18 1 15 1 10V4Z" fill="#1683d8" stroke="none" />
        <path d="M9 1V20C5 18 1 15 1 10V4Z" fill="#35b0f5" stroke="none" />
        <path d="M13.500 9.500 20 21.500H8Z" fill="#ffc61a" stroke="none" />
        <path d="M13.800 13V18M13.800 19V20.500" stroke="#252423" strokeWidth="1.500" />
      </Svg>
      <Svg w={20} h={16} className="ml-[19px]">
        <path d="M1 5.500C6 0 14 0 19 5.500" stroke="#5d636c" strokeWidth="1.800" />
        <path d="M4 8.500C7.500 4.800 12.500 4.800 16 8.500M6.500 11.500C8.500 9.300 11.500 9.300 13.500 11.500" stroke="#fff" strokeWidth="1.700" />
        <circle cx="10" cy="14" r="1.600" fill="#fff" stroke="none" />
      </Svg>
      <Svg w={20} h={16} className="ml-[10px]">
        <path d="M1 5.500H4L8.500 1.500V14.500L4 10.500H1ZM12.500 5 19 11.500M19 5 12.500 11.500" stroke="#fff" strokeLinejoin="round" />
      </Svg>
      <Svg w={22} h={20} className="ml-[10px] mb-[2px]">
        <path d="M8 4H15A3 3 0 0 1 18 7V10M2 9V16.500H11.500" stroke="#fff" strokeWidth="1.700" />
        <path d="M5 0 1.500 5.500H4.500L3.500 10 7.500 4.500H5Z" fill="#fff" stroke="none" />
        <path d="M10 8 6 12.500M6 9V12.800H9.500" stroke="#fff" />
        <path d="M16 19.500 11.500 15C10.500 12.500 14 10.500 16 13 18 10.500 21.500 12.500 20.500 15Z" fill="#fff" stroke="none" />
      </Svg>
      <div className="ml-auto mr-[11px] pb-[2px] text-right text-[15.500px] leading-[20px] tracking-[-0.03em]">
        <div>11:50</div>
        <div>10/10/2023</div>
      </div>
      <Svg w={18} h={20} className="mr-[26px]">
        <path d="M9 0C4.500 0 2.500 3.500 2.500 7V12L.5 16H17.500L15.500 12V7C15.500 3.500 13.500 0 9 0ZM6 17.500H12C12 20.500 6 20.500 6 17.500Z" fill="#8fe3ff" stroke="none" />
      </Svg>
    </div>
  );
}

export default function App() {
  return (
    <div className="flex h-[1080px] w-[1920px] flex-col overflow-hidden bg-[#f3f2f1] font-['Open_Sans',sans-serif] text-[#323130]">
      <TitleBar />
      <div className="relative z-10 h-[95px] shrink-0 bg-[#fafafa] shadow-[0_2px_7px_rgba(0,0,0,0.28)]">
        <div className="flex h-[45px] pl-[28px] pt-[8px] text-[17px] leading-[24px] tracking-[-0.02em] text-[#252423]">
          <span className="w-[73px]">File</span>
          <span className="h-[30px] w-[48px] border-b-[3px] border-[#387866] pb-[3px] font-semibold tracking-[-0.025em] text-[#111]">Home</span>
          <span className="ml-[39px] w-[75px]">Help</span>
          <span className="whitespace-nowrap">External tools</span>
        </div>
        <Ribbon />
      </div>
      <div className="flex min-h-0 flex-1">
        <Rail />
        <div className="flex min-w-0 flex-1 flex-col">
          <main className="relative min-h-0 flex-1 overflow-hidden bg-[#e0dfdd]">
            <svg className="absolute left-0 top-0 h-[808px] w-[1785px]" viewBox={`${CANVAS_X} ${CANVAS_Y} 1785 808`}>
              {LINKS.map((p) => (
                <polyline key={p} points={p} fill="none" stroke="#b1b0ae" strokeWidth="1.300" />
              ))}
              {MARKS.map((m) => (
                <MarkShape key={m.join()} m={m} />
              ))}
            </svg>
            {TABLES.map((t) => (
              <Card key={t.name} t={t} />
            ))}
          </main>
          <LayoutTabs />
        </div>
        <Pane label="Properties" />
        <Pane label="Data" />
      </div>
      <StatusBar />
      <Taskbar />
    </div>
  );
}
